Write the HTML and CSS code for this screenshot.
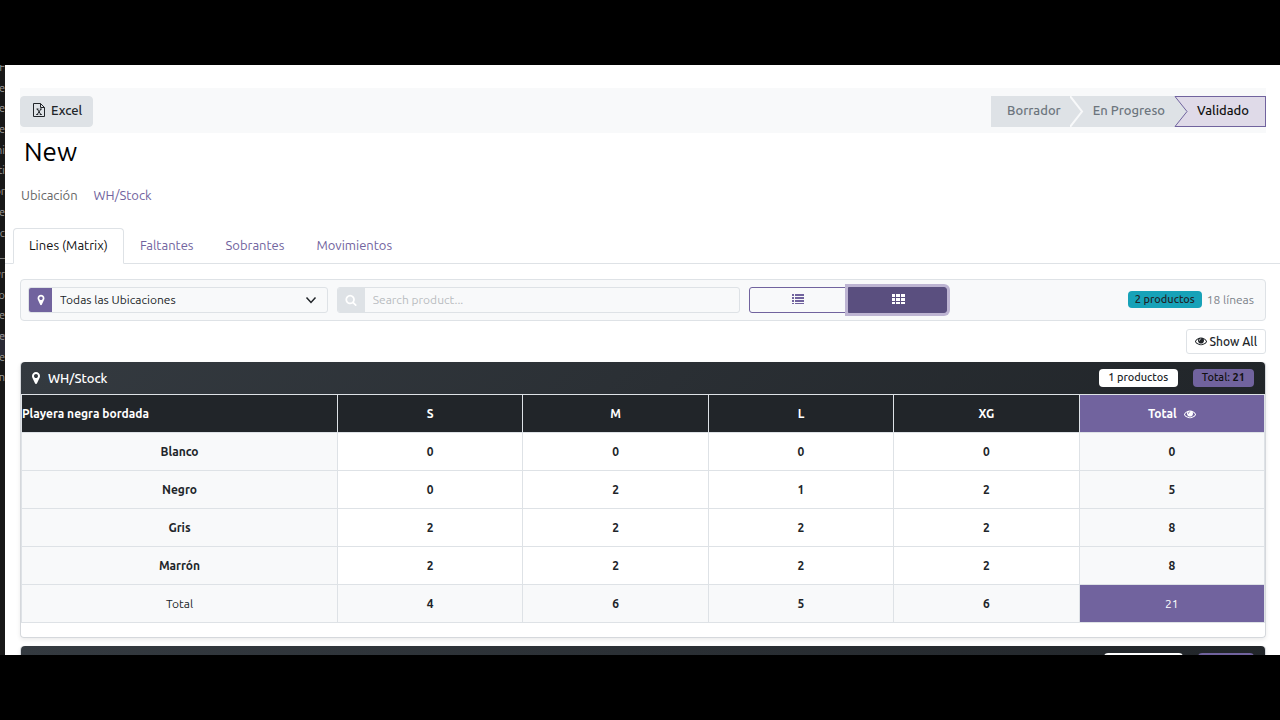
FILE: index.html
```
<!DOCTYPE html>
<html lang="es">
<head>
    <meta charset="UTF-8">
    <meta name="viewport" content="width=device-width, initial-scale=1.0">
    <title>New</title>
    <link rel="stylesheet" href="styles.css">
</head>
<body>
    <svg class="sprite" aria-hidden="true">
        <symbol id="eye" viewBox="0 0 1792 1792"><path d="M1664 960q-152-236-381-353 61 104 61 225 0 185-131.5 316.5t-316.5 131.5-316.5-131.5-131.5-316.5q0-121 61-225-229 117-381 353 133 205 333.5 326.5t434.5 121.5 434.5-121.5 333.5-326.5zm-720-384q0-20-14-34t-34-14q-125 0-214.5 89.5t-89.5 214.5q0 20 14 34t34 14 34-14 14-34q0-86 61-147t147-61q20 0 34-14t14-34zm848 384q0 34-20 69-140 230-376.5 368.5t-499.5 138.5-499.5-139-376.5-368q-20-35-20-69t20-69q140-229 376.5-368t499.5-139 499.5 139 376.5 368q20 35 20 69z"/></symbol>
        <symbol id="marker" viewBox="0 0 1792 1792"><path d="M1152 640q0-106-75-181t-181-75-181 75-75 181 75 181 181 75 181-75 75-181zm256 0q0 109-33 179l-364 774q-16 33-47.5 52t-67.5 19-67.5-19-46.5-52l-365-774q-33-70-33-179 0-212 150-362t362-150 362 150 150 362z"/></symbol>
        <symbol id="search" viewBox="0 0 1792 1792"><path d="M1216 832q0-185-131.5-316.5t-316.5-131.5-316.5 131.5-131.5 316.5 131.5 316.5 316.5 131.5 316.5-131.5 131.5-316.5zm512 832q0 52-38 90t-90 38q-54 0-90-38l-343-342q-179 124-399 124-143 0-273.5-55.5t-225-150-150-225-55.5-273.5 55.5-273.5 150-225 225-150 273.5-55.5 273.5 55.5 225 150 150 225 55.5 273.5q0 220-124 399l343 343q37 37 37 90z"/></symbol>
        <symbol id="list" viewBox="0 0 14 14"><path d="M1 1h2v2H1zM4 1h9v2H4zM1 4h2v2H1zM4 4h9v2H4zM1 7h2v2H1zM4 7h9v2H4zM1 10h2v1H1zM4 10h9v1H4z"/></symbol>
        <symbol id="grid" viewBox="0 0 14 14"><path d="M1 1h3v3H1zM5 1h4v3H5zM10 1h4v3h-4zM1 5h3v3H1zM5 5h4v3H5zM10 5h4v3h-4zM1 9h3v2H1zM5 9h4v2H5zM10 9h4v2h-4z"/></symbol>
        <symbol id="excel" viewBox="0 0 14 14"><path d="M1.5.5h7l4 4v9h-11zM8.5.5v4h4M4.500 6h2M7.800 6h2M4.200 11.500h2M7.800 11.500h2M5.300 6l3.500 5.500M9 6l-3.800 5.500" fill="none" stroke="currentColor"/></symbol>
    </svg>

    <div class="screen">
        <!-- editor window behind the browser -->
        <div class="editor">
            <span>F</span>
            <span>e</span>
            <span>e</span>
            <span>e</span>
            <span>ni</span>
            <span>ti</span>
            <span>or</span>
            <span>e</span>
            <span>uc</span>
            <span>_</span>
            <span>yr</span>
            <span>ro</span>
            <span>ve</span>
            <span class="selected">ve</span>
            <span>e</span>
            <span>.n</span>
        </div>

        <main class="form">
            <header class="statusbar">
                <button class="btn-excel"><svg class="icon"><use href="#excel"/></svg>Excel</button>
                <div class="steps">
                    <button class="step first">Borrador</button>
                    <svg class="arrow" viewBox="0 0 14 31" preserveAspectRatio="none">
                        <rect width="14" height="31" fill="#dee2e6"/>
                        <path d="M0 0l12 15.500L0 31" fill="none" stroke="#f8f9fa" stroke-width="2"/>
                    </svg>
                    <button class="step">En Progreso</button>
                    <svg class="arrow" viewBox="0 0 14 31" preserveAspectRatio="none">
                        <rect width="14" height="31" fill="#dee2e6"/>
                        <path d="M14 .5H1l12 15-12 15h13" fill="#dfdae8" stroke="#71639e"/>
                    </svg>
                    <button class="step current">Validado</button>
                </div>
            </header>

            <h1>New</h1>
            <div class="field">
                <span class="field-label">Ubicación</span>
                <a href="#">WH/Stock</a>
            </div>

            <nav class="tabs">
                <a href="#" class="active">Lines (Matrix)</a>
                <a href="#">Faltantes</a>
                <a href="#">Sobrantes</a>
                <a href="#">Movimientos</a>
            </nav>

            <section class="content">
                <div class="toolbar">
                    <div class="input-group location">
                        <label for="location" aria-label="Ubicación"><svg class="icon"><use href="#marker"/></svg></label>
                        <select id="location">
                            <option>Todas las Ubicaciones</option>
                        </select>
                    </div>
                    <div class="input-group product">
                        <label for="product" aria-label="Search"><svg class="icon"><use href="#search"/></svg></label>
                        <input type="text" id="product" placeholder="Search product...">
                    </div>
                    <div class="view-switch">
                        <button aria-label="List"><svg class="icon"><use href="#list"/></svg></button>
                        <button class="active" aria-label="Matrix"><svg class="icon"><use href="#grid"/></svg></button>
                    </div>
                    <div class="counts">
                        <span class="badge info">2 productos</span>
                        <span>18 líneas</span>
                    </div>
                </div>

                <div class="actions">
                    <button class="btn-show"><svg class="icon"><use href="#eye"/></svg>Show All</button>
                </div>

                <div class="card">
                    <div class="card-header">
                        <svg class="icon"><use href="#marker"/></svg>
                        <span>WH/Stock</span>
                        <span class="badge light">1 productos</span>
                        <span class="badge primary">Total: <b>21</b></span>
                    </div>
                    <table>
                        <thead>
                            <tr>
                                <th class="product-name">Playera negra bordada</th>
                                <th>S</th>
                                <th>M</th>
                                <th>L</th>
                                <th>XG</th>
                                <th class="total">Total <svg class="icon"><use href="#eye"/></svg></th>
                            </tr>
                        </thead>
                        <tbody>
                            <tr><th>Blanco</th><td>0</td><td>0</td><td>0</td><td>0</td><td class="sum">0</td></tr>
                            <tr><th>Negro</th><td>0</td><td>2</td><td>1</td><td>2</td><td class="sum">5</td></tr>
                            <tr><th>Gris</th><td>2</td><td>2</td><td>2</td><td>2</td><td class="sum">8</td></tr>
                            <tr><th>Marrón</th><td>2</td><td>2</td><td>2</td><td>2</td><td class="sum">8</td></tr>
                        </tbody>
                        <tfoot>
                            <tr><th>Total</th><td>4</td><td>6</td><td>5</td><td>6</td><td class="total">21</td></tr>
                        </tfoot>
                    </table>
                </div>

                <div class="card">
                    <div class="card-header">
                        <span class="badge light"></span>
                        <span class="badge primary"></span>
                    </div>
                </div>
            </section>
        </main>
    </div>
</body>
</html>
```
FILE: styles.css
```
* {
    box-sizing: border-box;
}

body {
    margin: 0;
    background: #000;
    color: #212529;
    font-family: Ubuntu, "Noto Sans", sans-serif;
    font-size: 13px;
}

button, input, select {
    font: inherit;
    color: inherit;
}

a {
    color: #71639e;
    text-decoration: none;
}

.sprite {
    display: none;
}

.icon {
    width: 14px;
    height: 14px;
    flex: none;
    fill: currentColor;
}

/* letterboxed screen */
.screen {
    display: flex;
    height: 100vh;
    border: solid #000;
    border-width: 65px 0;
    overflow: hidden;
}

.editor {
    width: 5px;
    flex: none;
    display: flex;
    flex-direction: column;
    padding-bottom: 259px;
    background: #181818;
    color: #999;
    font-size: 11px;
    overflow: hidden;
}

.editor span {
    flex: 1;
    display: flex;
    justify-content: flex-end;
    line-height: 4px;
}

.editor .selected {
    background: #2a2a35;
}

.form {
    flex: 1;
    min-width: 0;
    padding-top: 23px;
    background: #fff;
}

.statusbar {
    display: flex;
    justify-content: space-between;
    margin: 0 14px 0 15px;
    padding: 8px 0 6px;
    background: #f8f9fa;
}

.btn-excel {
    display: flex;
    align-items: center;
    gap: 5px;
    height: 31px;
    padding: 0 10px 3px 11px;
    background: #dee2e6;
    border: 1px solid #dee2e6;
    border-radius: 4px;
    font-weight: 500;
}

.steps {
    display: flex;
    height: 31px;
}

.arrow {
    width: 14px;
    height: 31px;
}

.step {
    padding: 0 9px 3px;
    background: #dee2e6;
    border: 0;
    color: #6c757d;
    font-weight: 500;
}

.step.first {
    padding-left: 16px;
}

.step.current {
    padding-right: 16px;
    background: #dfdae8;
    border: 1px solid #71639e;
    border-left: 0;
    color: #111;
}

h1 {
    margin: 0 19px;
    font-size: 26px;
    line-height: 38px;
    font-weight: 400;
    color: #000;
}

.field {
    display: flex;
    gap: 16px;
    margin: 14px 16px 0;
    line-height: 20px;
}

.field-label {
    color: #666;
}

.tabs {
    display: flex;
    margin-top: 23px;
    padding-left: 8px;
    border-bottom: 1px solid #dee2e6;
}

.tabs a {
    margin-bottom: -1px;
    padding: 6px 15px 8px;
    border: 1px solid transparent;
    line-height: 20px;
}

.tabs .active {
    background: #fff;
    border-color: #dee2e6 #dee2e6 #fff;
    border-radius: 4px 4px 0 0;
    color: #111;
}

.content {
    padding: 15px 14px 0 15px;
}

.toolbar {
    display: flex;
    gap: 9px;
    padding: 7px;
    background: #f8f9fa;
    border: 1px solid #dee2e6;
    border-radius: 4px;
    font-size: 12px;
}

.input-group {
    display: flex;
    height: 26px;
    border: 1px solid #dee2e6;
    border-radius: 3px;
    overflow: hidden;
}

.location {
    flex: 300;
}

.product {
    flex: 404;
}

.input-group label {
    display: flex;
    align-items: center;
    justify-content: center;
    width: 23px;
    background: #71639e;
    color: #fff;
}

.input-group select,
.input-group input {
    flex: 1;
    min-width: 0;
    padding: 0 8px 2px;
    border: 0;
    background: transparent;
}

.input-group select {
    appearance: none;
    background: url("data:image/svg+xml,%3Csvg xmlns='http://www.w3.org/2000/svg' viewBox='0 0 12 12'%3E%3Cpath d='M1.500 3.500l4.500 5 4.500-5' fill='none' stroke='%23212529' stroke-width='1.500'/%3E%3C/svg%3E") right 10px center / 12px 12px no-repeat;
}

.input-group .icon {
    width: 12px;
    height: 12px;
}

.product label {
    width: 27px;
    background: #dee2e6;
}

.input-group input::placeholder {
    color: #b8bcc0;
}

.view-switch {
    flex: 200;
    display: flex;
}

.view-switch button {
    flex: 1;
    display: flex;
    align-items: center;
    justify-content: center;
    background: transparent;
    border: 1px solid #71639e;
    border-radius: 3px 0 0 3px;
    color: #71639e;
}

.view-switch .active {
    background: #5a4f7f;
    border-color: #5a4f7f;
    border-radius: 0 3px 3px 0;
    box-shadow: 0 0 0 3px #bdb4d2;
    color: #fff;
}

.counts {
    flex: 300;
    display: flex;
    align-items: center;
    justify-content: flex-end;
    gap: 5px;
    padding: 0 4px 2px 0;
    color: #7d838a;
}

.badge {
    min-height: 18px;
    padding: 0 9px;
    border-radius: 4px;
    font-size: 11px;
    line-height: 17px;
    font-weight: 500;
    color: #212529;
}

.badge.info {
    min-height: 17px;
    padding: 0 7px;
    background: #17a2b8;
}

.badge.light {
    min-width: 79px;
    background: #fff;
    text-align: center;
}

.badge.primary {
    min-width: 56px;
    background: #71639e;
    color: #111;
}

.actions {
    display: flex;
    justify-content: flex-end;
    margin: 8px 0;
}

.btn-show {
    display: flex;
    align-items: center;
    gap: 3px;
    height: 25px;
    padding: 0 8px 1px;
    background: #fff;
    border: 1px solid #dee2e6;
    border-radius: 3px;
    font-size: 12px;
    font-weight: 500;
}

.btn-show .icon, th .icon {
    width: 12px;
    height: 12px;
}

.card {
    margin-bottom: 8px;
    padding-bottom: 14px;
    border: 1px solid #d5d8dc;
    border-top: 0;
    border-radius: 4px;
    box-shadow: 0 2px 4px rgba(0, 0, 0, 0.08);
}

.card-header {
    display: flex;
    align-items: center;
    gap: 5px;
    height: 32px;
    padding: 0 11px 1px 8px;
    background: linear-gradient(135deg, #343a40, #212529);
    border-radius: 4px 4px 0 0;
    color: #fff;
    font-weight: 500;
}

.card-header .light {
    margin: 0 10px 0 auto;
}

table {
    width: 100%;
    border-collapse: collapse;
    table-layout: fixed;
    text-align: center;
}

th, td {
    height: 38px;
    padding: 0;
    border: 1px solid #dee2e6;
    font-size: 12px;
    font-weight: 700;
}

thead th {
    background: #212529;
    color: #fff;
}

thead .product-name {
    width: 316px;
    text-align: left;
}

tbody th, .sum, tfoot th, tfoot td {
    background: #f8f9fa;
}

tfoot th {
    font-weight: 400;
}

thead .total, tfoot .total {
    background: #71639e;
    color: #fff;
}

tfoot .total {
    font-weight: 400;
}

th .icon {
    margin-left: 4px;
    vertical-align: -2px;
}
```
